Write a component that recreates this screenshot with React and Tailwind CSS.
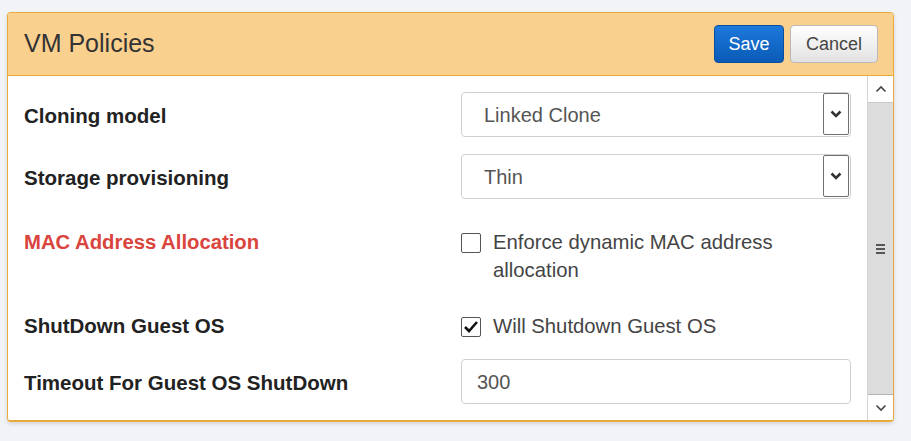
import React from "react";

const font = { fontFamily: "'Liberation Sans', Arial, sans-serif" };

function Chevron({ up = false, className = "" }) {
  return (
    <svg width="12" height="8" viewBox="0 0 12 8" className={className}>
      <polyline
        points={up ? "1.5,6.5 6,2 10.5,6.5" : "1.5,1.5 6,6 10.5,1.5"}
        fill="none"
        stroke="currentColor"
        strokeWidth="1.6"
      />
    </svg>
  );
}

function Select({ value }) {
  return (
    <div className="flex h-[45px] w-[390px] items-stretch rounded-[4px] border border-[#cfcfcf] bg-white">
      <div className="flex flex-1 items-center pl-[22px] text-[20px] text-[#555]">{value}</div>
      <div className="mb-[1px] mr-[1px] flex w-[26px] items-center justify-center rounded-[2px] border-[1.5px] border-[#707070] bg-white text-[#333]">
        <svg width="12" height="8" viewBox="0 0 12 8">
          <polyline points="1.5,1.5 6,6 10.5,1.5" fill="none" stroke="currentColor" strokeWidth="2.6" />
        </svg>
      </div>
    </div>
  );
}

function Checkbox({ checked }) {
  return (
    <div className="mt-[5px] flex h-[20px] w-[20px] shrink-0 items-center justify-center rounded-[2px] border border-[#555] bg-white">
      {checked && (
        <svg width="16" height="14" viewBox="0 0 16 14">
          <polyline points="2,7 6,11 14,2" fill="none" stroke="#111" strokeWidth="2.6" />
        </svg>
      )}
    </div>
  );
}

export default function App() {
  return (
    <div className="min-h-screen bg-[#f1f3f6] pl-[7px] pt-[12px]" style={font}>
      <div className="flex h-[410px] w-[887px] flex-col overflow-hidden rounded-[4px] border border-b-2 border-[#e9aa3c] shadow-[0_2px_4px_rgba(0,0,0,0.12)]">
        <div className="flex h-[63px] shrink-0 items-center justify-between border-b border-[#e9aa3c] bg-[#fad08f] pl-[16px] pr-[15px]">
          <div className="text-[25px] text-[#333]">VM Policies</div>
          <div className="flex gap-[6px]">
            <button className="h-[38px] w-[70px] rounded-[4px] border border-[#0a4f9e] bg-gradient-to-b from-[#1c79dc] to-[#0a5bb6] text-[18px] text-white">
              Save
            </button>
            <button className="h-[38px] w-[88px] rounded-[4px] border border-[#b9b9b9] bg-gradient-to-b from-[#ffffff] to-[#e2e2e2] text-[18px] text-[#444]">
              Cancel
            </button>
          </div>
        </div>
        <div className="flex flex-1 bg-white">
          <div className="flex flex-1 flex-col pl-[16px]">
            <div className="mt-[16px] flex items-center">
              <div className="w-[437px] pt-[3px] text-[20.5px] font-bold text-[#222]">Cloning model</div>
              <Select value="Linked Clone" />
            </div>
            <div className="mt-[17px] flex items-center">
              <div className="w-[437px] pt-[3px] text-[20.5px] font-bold text-[#222]">Storage provisioning</div>
              <Select value="Thin" />
            </div>
            <div className="mt-[29px] flex items-start">
              <div className="w-[437px] text-[20.3px] font-bold leading-[28px] text-[#d9443c]">MAC Address Allocation</div>
              <div className="flex w-[390px] gap-[12px]">
                <Checkbox checked={false} />
                <div className="text-[20.3px] leading-[28px] text-[#444]">
                  Enforce dynamic MAC address
                  <br />
                  allocation
                </div>
              </div>
            </div>
            <div className="mt-[28px] flex items-start">
              <div className="w-[437px] text-[20.5px] font-bold leading-[28px] text-[#222]">ShutDown Guest OS</div>
              <div className="flex w-[390px] gap-[12px]">
                <Checkbox checked={true} />
                <div className="text-[20.3px] leading-[28px] text-[#444]">Will Shutdown Guest OS</div>
              </div>
            </div>
            <div className="mt-[19px] flex items-center">
              <div className="w-[437px] pt-[3px] text-[20.5px] font-bold text-[#222]">Timeout For Guest OS ShutDown</div>
              <div className="flex h-[45px] w-[390px] items-center rounded-[4px] border border-[#cfcfcf] bg-white pl-[15px] text-[20px] text-[#555]">
                300
              </div>
            </div>
          </div>
          <div className="flex w-[26px] flex-col border-l border-[#d4d4d4]">
            <div className="flex h-[27px] items-center justify-center border-b border-[#c9c9c9] bg-white text-[#444]">
              <Chevron up />
            </div>
            <div className="flex flex-1 items-center justify-center border-b border-[#b5b5b5] bg-[#dcdcdc]">
              <div className="flex flex-col gap-[2px]">
                <div className="h-[2px] w-[9px] bg-[#555]" />
                <div className="h-[2px] w-[9px] bg-[#555]" />
                <div className="h-[2px] w-[9px] bg-[#555]" />
              </div>
            </div>
            <div className="flex h-[25px] items-center justify-center bg-white text-[#444]">
              <Chevron />
            </div>
          </div>
        </div>
      </div>
    </div>
  );
}
